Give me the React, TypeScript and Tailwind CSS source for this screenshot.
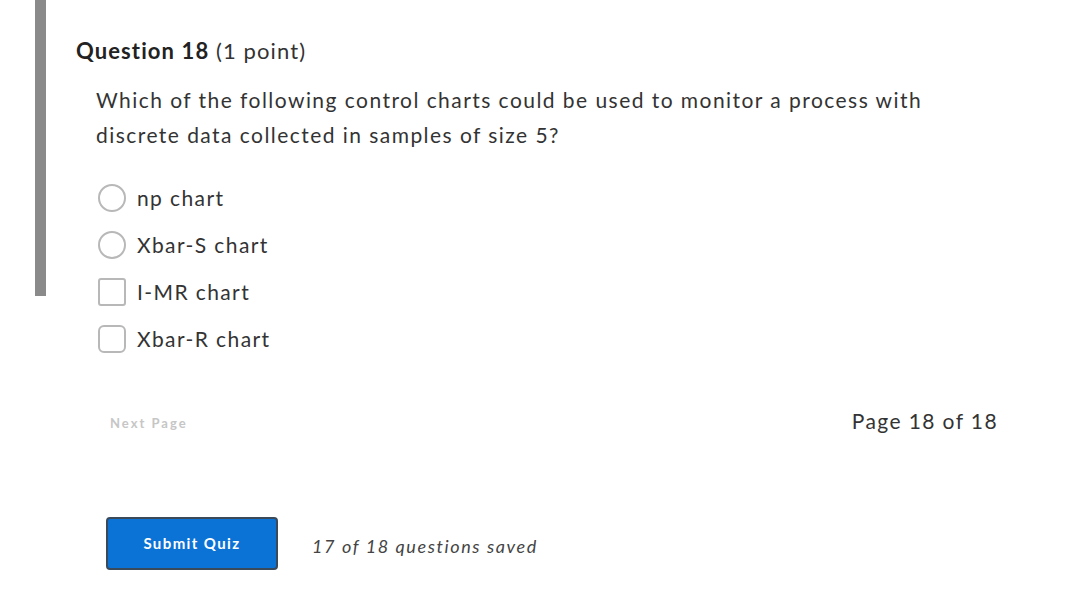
import React from 'react';

const options = ['np chart', 'Xbar-S chart', 'I-MR chart', 'Xbar-R chart'];
const shapes = ['rounded-full', 'rounded-full', 'rounded-[3px]', 'rounded-[6px]'];

export default function App() {
  return (
    <div className="w-[1090px] h-[593px] bg-white text-[#222] font-['Lato',sans-serif] flex overflow-hidden">
      <div className="w-[35px] shrink-0" />
      <div className="w-[11px] h-[296px] shrink-0 bg-[#8a8a8a]" />
      <div className="flex-1 flex flex-col pl-[30px] pr-[92px]">
        <h2 className="mt-[36px] text-[22px] leading-[30px] tracking-[1.1px]">
          <span className="font-bold">Question 18</span> <span className="text-[#333]">(1 point)</span>
        </h2>
        <p className="mt-[16px] ml-[20px] text-[21px] leading-[35px] tracking-[1.45px] text-[#333] max-w-[860px]">
          Which of the following control charts could be used to monitor a process with discrete data collected in samples of size 5?
        </p>
        <div className="mt-[32px] ml-[22px] flex flex-col gap-[19px]">
          {options.map((o, i) => (
            <label key={o} className="flex items-center gap-[11px] h-[28px]">
              <span className={`w-[28px] h-[28px] border-2 border-[#b8b8b8] bg-white ${shapes[i]}`} />
              <span className="text-[21px] tracking-[1.4px] text-[#333]">{o}</span>
            </label>
          ))}
        </div>
        <div className="mt-[52px] flex items-center justify-between">
          <span className="ml-[34px] mt-[5px] text-[13px] tracking-[2px] text-[#c6c6c6] font-bold">Next Page</span>
          <span className="text-[21px] tracking-[1.4px] text-[#333]">Page 18 of 18</span>
        </div>
        <div className="mt-[80px] ml-[30px] flex items-center gap-[34px]">
          <button className="w-[172px] h-[53px] rounded-[4px] bg-[#0b72d6] border-2 border-[#3a4a5a] text-white text-[15px] tracking-[1.4px] font-bold">
            Submit Quiz
          </button>
          <span className="mt-[6px] italic text-[18px] tracking-[1.6px] text-[#444]">17 of 18 questions saved</span>
        </div>
      </div>
    </div>
  );
}
